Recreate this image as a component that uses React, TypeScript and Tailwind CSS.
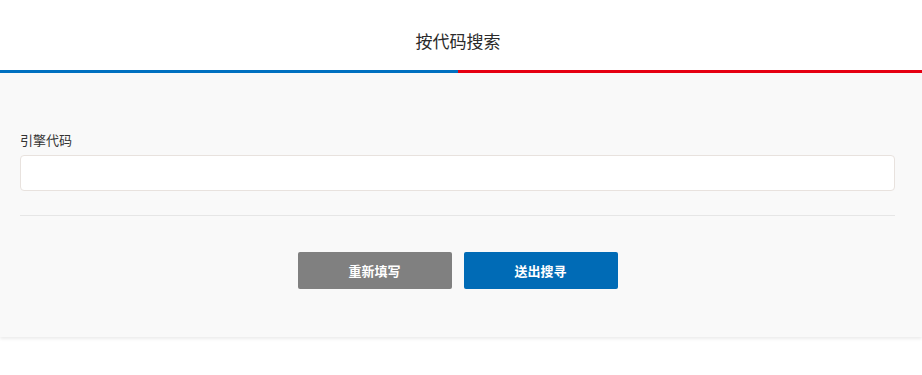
export default function App() {
  return (
    <div
      className="min-h-[375px] w-full bg-white"
      style={{ fontFamily: "'Noto Sans CJK SC', 'Noto Sans', sans-serif" }}
    >
      {/* Header */}
      <div className="h-[70px] pt-[29px] pr-[6px] text-center text-[17px] leading-6 text-[#2b2b2b]">
        按代码搜索
      </div>
      <div className="flex h-[3px]">
        <div className="w-[458px] bg-[#0070c0]" />
        <div className="flex-1 bg-[#e60012]" />
      </div>

      {/* Form panel */}
      <div className="bg-[#f9f9f9] pl-[20px] pr-[27px] pt-[57px] pb-[48px] shadow-[0_2px_3px_rgba(0,0,0,0.08)]">
        <label className="block text-[13px] leading-5 text-[#333]">引擎代码</label>
        <input
          type="text"
          className="mt-[5px] block h-[36px] w-full rounded-[4px] border border-[#e8e2de] bg-white px-3 text-[13px] outline-none"
        />
        <div className="mt-[24px] h-px bg-[#e6e6e6]" />
        <div className="mt-[36px] flex justify-center gap-[12px]">
          <button className="h-[37px] w-[154px] rounded-[2px] bg-[#808080] text-[13px] font-semibold text-white">
            重新填写
          </button>
          <button className="h-[37px] w-[154px] rounded-[2px] bg-[#006bb6] text-[13px] font-semibold text-white">
            送出搜寻
          </button>
        </div>
      </div>
    </div>
  );
}
